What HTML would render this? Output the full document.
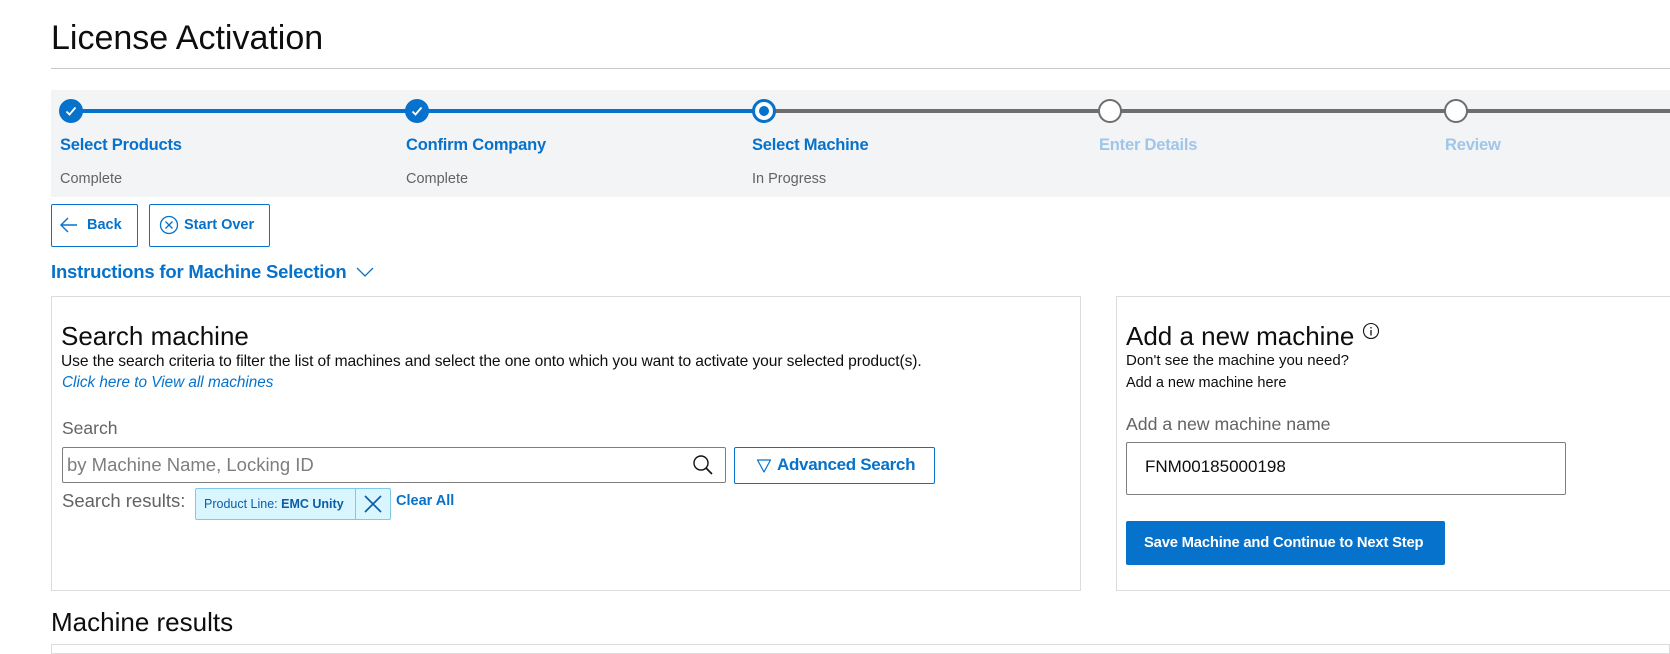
<!DOCTYPE html>
<html><head><meta charset="utf-8"><style>
*{box-sizing:border-box;margin:0;padding:0}
body{width:1670px;height:650px;overflow:hidden;background:#fff;font-family:"Liberation Sans",Arial,sans-serif;position:relative;color:#0e0e0e}
.a{position:absolute;white-space:nowrap}
.blue{color:#0672cb}
.lbl{font-size:16.5px;font-weight:bold;letter-spacing:-0.2px}
.sub{font-size:14.5px;color:#636363}
.circ{position:absolute;width:24px;height:24px;border-radius:50%}
</style></head><body>
<div class="a" style="left:51px;top:19px;font-size:34px;color:#0e0e0e">License Activation</div>
<div class="a" style="left:51px;top:68px;width:1619px;height:1px;background:#c8c9c9"></div>
<div class="a" style="left:51px;top:90px;width:1619px;height:107px;background:#f3f4f6"></div>
<div class="a" style="left:71px;top:109px;width:693px;height:4px;background:#0672cb"></div>
<div class="a" style="left:764px;top:109px;width:906px;height:4px;background:#6e6e6e"></div>
<div class="circ" style="left:59px;top:99px;background:#0672cb"><svg width="24" height="24"><path d="M7.5 12.5l3 3 6-7" stroke="#fff" stroke-width="1.8" fill="none"/></svg></div>
<div class="circ" style="left:405px;top:99px;background:#0672cb"><svg width="24" height="24"><path d="M7.5 12.5l3 3 6-7" stroke="#fff" stroke-width="1.8" fill="none"/></svg></div>
<div class="circ" style="left:752px;top:99px;background:#fff;border:3px solid #0672cb"><div style="position:absolute;left:4px;top:4px;width:10px;height:10px;border-radius:50%;background:#0672cb"></div></div>
<div class="circ" style="left:1098px;top:99px;background:#fff;border:2px solid #6e6e6e"></div>
<div class="circ" style="left:1444px;top:99px;background:#fff;border:2px solid #6e6e6e"></div>
<div class="a lbl blue" style="left:60px;top:136px">Select Products</div>
<div class="a lbl blue" style="left:406px;top:136px">Confirm Company</div>
<div class="a lbl blue" style="left:752px;top:136px">Select Machine</div>
<div class="a lbl" style="left:1099px;top:136px;color:#9fc6e8">Enter Details</div>
<div class="a lbl" style="left:1445px;top:136px;color:#9fc6e8">Review</div>
<div class="a sub" style="left:60px;top:171px">Complete</div>
<div class="a sub" style="left:406px;top:171px">Complete</div>
<div class="a sub" style="left:752px;top:171px">In Progress</div>
<div class="a" style="left:51px;top:204px;width:87px;height:43px;border:1px solid #0672cb;border-radius:2px"></div>
<svg class="a" style="left:59px;top:216px" width="20" height="18"><path d="M18 9H2M9 2L2 9l7 7" stroke="#0672cb" stroke-width="1.4" fill="none"/></svg>
<div class="a blue" style="left:87px;top:217px;font-size:14.5px;font-weight:bold">Back</div>
<div class="a" style="left:149px;top:204px;width:121px;height:43px;border:1px solid #0672cb;border-radius:2px"></div>
<svg class="a" style="left:159px;top:215px" width="20" height="20"><circle cx="10" cy="10" r="8.5" stroke="#0672cb" stroke-width="1.3" fill="none"/><path d="M6.5 6.5l7 7M13.5 6.5l-7 7" stroke="#0672cb" stroke-width="1.3"/></svg>
<div class="a blue" style="left:184px;top:217px;font-size:14.5px;font-weight:bold">Start Over</div>
<div class="a blue" style="left:51px;top:261px;font-size:18.5px;font-weight:bold;letter-spacing:-0.2px">Instructions for Machine Selection</div>
<svg class="a" style="left:356px;top:266px" width="18" height="12"><path d="M1 2l8 8 8-8" stroke="#0672cb" stroke-width="1.3" fill="none"/></svg>

<div class="a" style="left:51px;top:296px;width:1030px;height:295px;border:1px solid #dcdcdc"></div>
<div class="a" style="left:61px;top:321px;font-size:26px">Search machine</div>
<div class="a" style="left:61px;top:353px;font-size:15.6px;letter-spacing:-0.1px">Use the search criteria to filter the list of machines and select the one onto which you want to activate your selected product(s).</div>
<div class="a blue" style="left:62px;top:374px;font-size:15.3px;font-style:italic">Click here to View all machines</div>
<div class="a" style="left:62px;top:418px;font-size:17.5px;color:#636363">Search</div>
<div class="a" style="left:62px;top:447px;width:664px;height:36px;border:1px solid #7e7e7e;border-radius:2px"></div>
<div class="a" style="left:67px;top:454px;font-size:18.5px;color:#7e7e7e">by Machine Name, Locking ID</div>
<svg class="a" style="left:692px;top:454px" width="22" height="22"><circle cx="9" cy="9" r="7" stroke="#111" stroke-width="1.4" fill="none"/><path d="M14 14l6 6" stroke="#111" stroke-width="1.6"/></svg>
<div class="a" style="left:734px;top:447px;width:201px;height:37px;border:1px solid #0672cb;border-radius:2px"></div>
<svg class="a" style="left:756px;top:458px" width="16" height="16"><path d="M1.5 2h13L8 14z" stroke="#0672cb" stroke-width="1.2" fill="none" stroke-linejoin="round"/></svg>
<div class="a blue" style="left:777px;top:455px;font-size:17px;font-weight:bold;letter-spacing:-0.3px">Advanced Search</div>
<div class="a" style="left:62px;top:490px;font-size:18.5px;color:#636363">Search results:</div>
<div class="a" style="left:195px;top:488px;width:196px;height:32px;background:#d9f5fd;border:1px solid #7fc8ea;border-radius:2px"></div>
<div class="a" style="left:355px;top:488px;width:1px;height:32px;background:#7fc8ea"></div>
<div class="a" style="left:204px;top:497px;font-size:12.5px;color:#0b5da8">Product Line: <b>EMC Unity</b></div>
<svg class="a" style="left:363px;top:494px" width="20" height="20"><path d="M2 2l16 16M18 2L2 18" stroke="#0b5da8" stroke-width="1.7"/></svg>
<div class="a blue" style="left:396px;top:493px;font-size:14.5px;font-weight:bold">Clear All</div>

<div class="a" style="left:1116px;top:296px;width:560px;height:295px;border:1px solid #dcdcdc"></div>
<div class="a" style="left:1126px;top:321px;font-size:26px">Add a new machine</div>
<svg class="a" style="left:1362px;top:322px" width="18" height="18"><circle cx="9" cy="9" r="7.5" stroke="#111" stroke-width="1.1" fill="none"/><path d="M9 8v5.5M9 5v1.5" stroke="#111" stroke-width="1.3"/></svg>
<div class="a" style="left:1126px;top:352px;font-size:15px">Don't see the machine you need?</div>
<div class="a" style="left:1126px;top:375px;font-size:14.5px">Add a new machine here</div>
<div class="a" style="left:1126px;top:414px;font-size:17.7px;color:#636363">Add a new machine name</div>
<div class="a" style="left:1126px;top:442px;width:440px;height:53px;border:1px solid #7e7e7e;border-radius:2px"></div>
<div class="a" style="left:1145px;top:457px;font-size:17px">FNM00185000198</div>
<div class="a" style="left:1126px;top:521px;width:319px;height:44px;background:#0672cb;border-radius:2px"></div>
<div class="a" style="left:1144px;top:535px;font-size:14.8px;font-weight:bold;color:#fff;letter-spacing:-0.2px">Save Machine and Continue to Next Step</div>

<div class="a" style="left:51px;top:607px;font-size:26px">Machine results</div>
<div class="a" style="left:51px;top:644px;width:1619px;height:10px;border:1px solid #dcdcdc"></div>
</body></html>
